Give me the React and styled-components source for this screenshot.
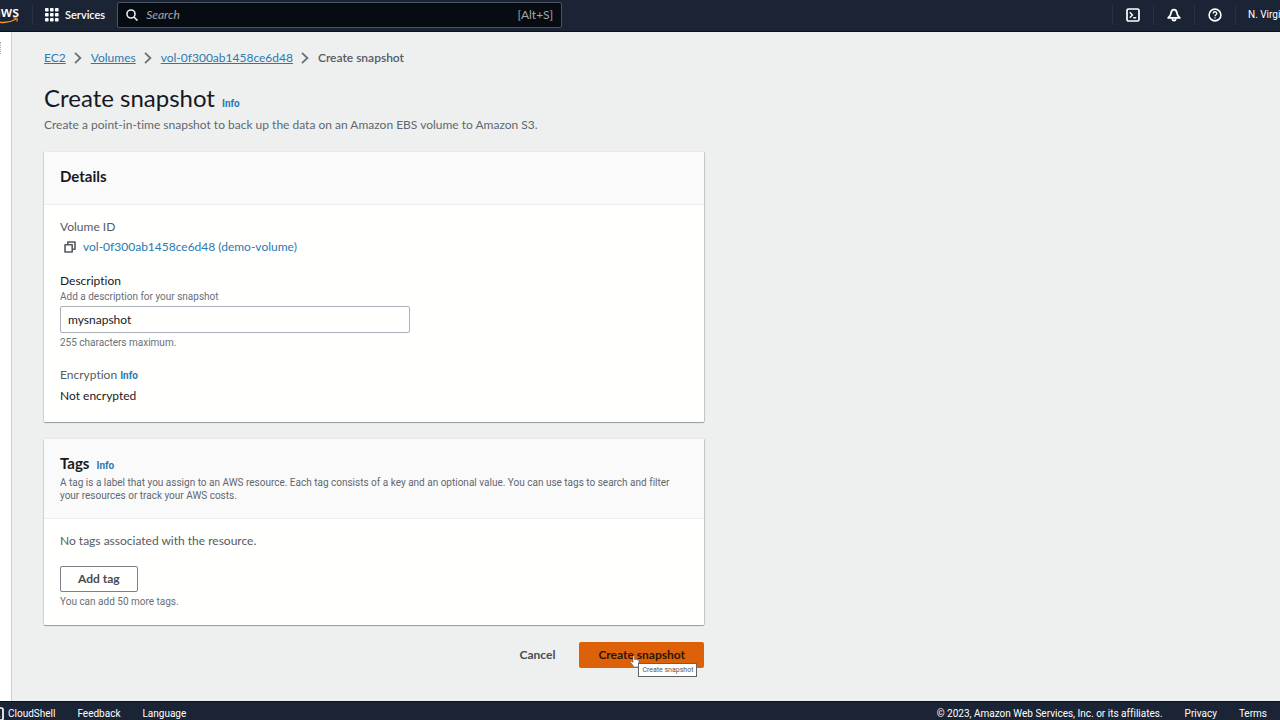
import React, { useState } from "react";
import styled, { createGlobalStyle } from "styled-components";

const GlobalStyle = createGlobalStyle`
  * {
    box-sizing: border-box;
  }
  body {
    margin: 0;
    background: #eef0f0;
    color: #16191f;
    font-family: Lato, "Open Sans", sans-serif;
    font-size: 12px;
    line-height: 20px;
    font-variant-ligatures: none;
  }
  h1, h2, p, ol {
    margin: 0;
    padding: 0;
  }
  button, input {
    font-family: inherit;
  }
`;

//small print uses a taller face so it stays readable
const smallFont = `Roboto, "Open Sans", sans-serif`;

//icons
const GridIcon = () => (
  <svg width="14" height="14" viewBox="0 0 14 14" fill="#fff" aria-hidden="true">
    {[0, 5, 10].map((y) =>
      [0, 5, 10].map((x) => (
        <rect key={`${x}-${y}`} x={x} y={y} width="3.6" height="3.6" rx="0.8" />
      ))
    )}
  </svg>
);

const SearchIcon = () => (
  <svg width="12" height="12" viewBox="0 0 12 12" fill="none" stroke="#e8eaec" strokeWidth="1.6" aria-hidden="true">
    <circle cx="5" cy="5" r="4" />
    <path d="M8 8l3.4 3.6" />
  </svg>
);

const ShellIcon = () => (
  <svg width="14" height="14" viewBox="0 0 14 14" fill="none" stroke="#fff" strokeWidth="1.7" aria-hidden="true">
    <rect x="1" y="1" width="12" height="12" rx="1.6" />
    <path d="M3.8 4.3L6.4 7 3.8 9.7M7.2 9.8h3" strokeWidth="1.4" />
  </svg>
);

const BellIcon = () => (
  <svg width="14" height="14" viewBox="0 0 14 14" fill="none" stroke="#fff" strokeWidth="1.8" strokeLinejoin="round" aria-hidden="true">
    <path d="M7 1.6C5 1.6 4.3 3.2 4.1 5 3.9 7 3 8.3 1.2 9.9h11.6C11 8.3 10.1 7 9.9 5 9.7 3.2 9 1.6 7 1.6z" />
    <path d="M5.3 10.4c0 2.8 3.4 2.8 3.4 0" />
  </svg>
);

const HelpIcon = () => (
  <svg width="14" height="14" viewBox="0 0 14 14" fill="none" stroke="#fff" strokeWidth="1.6" aria-hidden="true">
    <circle cx="7" cy="7" r="5.9" />
    <path d="M5.2 5.5c0-2.3 3.6-2.3 3.6-.1 0 1.4-1.8 1.3-1.8 2.8M7 9.2v1.3" strokeWidth="1.3" />
  </svg>
);

const ChevronIcon = () => (
  <svg width="8" height="12" viewBox="0 0 8 12" fill="none" stroke="#687078" strokeWidth="1.8" aria-hidden="true">
    <path d="M1 0.8L6.4 6 1 11.2" />
  </svg>
);

const CopyIcon = () => (
  <svg width="12" height="12" viewBox="0 0 12 12" fill="none" stroke="#545b64" strokeWidth="1.6" strokeLinejoin="round" aria-hidden="true">
    <rect x="1" y="3.8" width="7.2" height="7.2" />
    <path d="M3.8 3.6V1H11v7.2H8.4" />
  </svg>
);

const HandCursor = () => (
  <svg width="10" height="13" viewBox="0 0 10 13" fill="#fff" stroke="#5a4a40" strokeWidth="0.5" strokeLinejoin="round" aria-hidden="true">
    <path d="M3 7.4V1.2c0-1 1.4-1 1.4 0v3.4c.3-.7 1.4-.6 1.5.2.4-.6 1.4-.4 1.5.3.5-.5 1.5-.2 1.5.7v2.8c0 1.2-.8 1.8-.8 3.4H3.6C3.5 10.5 2 9.3.7 7.4c-.5-.9.5-1.5 1.2-.9z" />
  </svg>
);

const Smile = () => (
  <svg width="30" height="7" viewBox="0 0 30 7" fill="none" stroke="#f0962a" strokeWidth="1.3" aria-hidden="true">
    <path d="M2 1.5c7 5.2 17 5.2 25 .8M24.5 1.2c2.5-.5 4.5-.3 3.3 3.3" />
  </svg>
);

//page frame
const Page = styled.div`
  display: flex;
  flex-direction: column;
  height: 100vh;
  overflow: hidden;
`;

const TopBar = styled.header`
  display: flex;
  align-items: center;
  flex: none;
  height: 32px;
  padding-bottom: 2px;
  border-bottom: 1px solid #0a1220;
  background: #1b2434;
  color: #fff;
`;

const Logo = styled.a`
  display: flex;
  flex-direction: column;
  align-items: flex-end;
  justify-content: center;
  flex: none;
  width: 19px;
  height: 28px;
  overflow: hidden;
  color: #fff;
  font-family: "Open Sans", sans-serif;
  font-size: 14px;
  line-height: 11px;
  font-weight: 600;
  text-decoration: none;
`;

const BarButton = styled.button`
  display: flex;
  align-items: center;
  justify-content: center;
  flex: none;
  gap: 6px;
  min-width: 41px;
  height: 20px;
  padding: 0 12px;
  border: 0;
  border-left: 1px solid #273142;
  background: transparent;
  color: #fff;
  font-family: ${smallFont};
  font-size: 10px;
  white-space: nowrap;
`;

const ServicesButton = styled(BarButton)`
  margin-left: 13px;
  font-family: inherit;
  font-size: 11px;
  font-weight: 600;
`;

const SearchBox = styled.label`
  display: flex;
  align-items: center;
  gap: 8px;
  flex: 0 1 445px;
  height: 26px;
  padding: 0 8px;
  border: 1px solid #4b5461;
  border-radius: 2px;
  background: #070c13;
  color: #a3a7ad;

  input {
    flex: 1;
    min-width: 0;
    padding: 0;
    border: 0;
    outline: 0;
    background: transparent;
    color: #fff;
    font-size: 12px;
  }
  input::placeholder {
    color: #a3a7ad;
    font-style: italic;
  }
`;

const BarTools = styled.div`
  display: flex;
  flex: none;
  width: 168px;
  margin-left: auto;
  overflow: hidden;
`;

const Middle = styled.div`
  display: flex;
  flex: 1;
  min-height: 0;
`;

const SideRail = styled.aside`
  flex: none;
  width: 12px;
  padding-top: 10px;
  border-right: 1px solid #cdd0d2;
  background: #fff;
`;

const RailHandle = styled.div`
  width: 1px;
  height: 12px;
  border-left: 1px dotted #aab0b5;
`;

const Main = styled.main`
  flex: 1;
  min-width: 0;
  padding: 16px 32px 0;
  overflow: hidden;
`;

const BottomBar = styled.footer`
  display: flex;
  align-items: center;
  flex: none;
  gap: 22px;
  height: 19px;
  padding: 6px 13px 0 0;
  border-top: 1px solid #0a1220;
  background: #1b2434;
  color: #fff;
  font-family: ${smallFont};
  font-size: 10px;
  line-height: 16px;

  a {
    color: inherit;
    text-decoration: none;
  }
`;

const ShellLink = styled.a`
  display: flex;
  align-items: center;
  gap: 4px;
`;

const ClippedIcon = styled.span`
  display: flex;
  justify-content: flex-end;
  width: 4px;
  overflow: hidden;

  svg {
    flex: none;
  }
`;

const Copyright = styled.span`
  margin-left: auto;
`;

//page content
const Breadcrumbs = styled.ol`
  display: flex;
  align-items: center;
  list-style: none;

  li {
    display: flex;
    align-items: center;
    gap: 8px;
    margin-right: 9px;
    color: #545b64;
  }
  a {
    color: #2a7ab0;
    text-underline-offset: 1px;
  }
  li:last-child {
    font-weight: 600;
  }
`;

const TitleRow = styled.div`
  display: flex;
  align-items: baseline;
  gap: 7px;
  margin-top: ${(props) => (props.$page ? 14 : 0)}px;
`;

const PageTitle = styled.h1`
  font-size: 24px;
  line-height: 32px;
  font-weight: 400;
`;

const CardTitle = styled.h2`
  font-size: 15px;
  line-height: 20px;
  font-weight: 700;
`;

const InfoLink = styled.a`
  color: #2a7ab0;
  font-family: ${smallFont};
  font-size: 10px;
  font-weight: 700;
  text-decoration: none;
`;

const Lead = styled.p`
  margin-top: 1px;
  color: #5f676f;
`;

const Form = styled.form`
  display: flex;
  flex-direction: column;
  gap: 17px;
  max-width: 660px;
  margin-top: 17px;
`;

const Card = styled.section`
  background: #fffffd;
  border-radius: 1px;
  box-shadow: 0 1px 1px #93989c, 1px 0 1px #c5c8ca, -1px 0 1px #d5d8d9;
`;

const CardHeader = styled.div`
  padding: 14px 16px ${(props) => (props.$tall ? 16 : 18)}px;
  border-bottom: 1px solid #eceeee;
  background: #fafafa;
`;

const CardNote = styled.p`
  color: #5f676f;
  font-family: ${smallFont};
  font-size: 10px;
  line-height: 13px;
`;

const CardBody = styled.div`
  display: flex;
  flex-direction: column;
  align-items: flex-start;
  gap: 15px;
  padding: 12px 16px 16px;
`;

const Field = styled.div`
  display: flex;
  flex-direction: column;
  width: 100%;
  max-width: 350px;
`;

const Muted = styled.span`
  color: #545b64;
`;

const Hint = styled.span`
  color: #687078;
  font-family: ${smallFont};
  font-size: 10px;
  line-height: 14px;
`;

const FieldLabel = styled.label`
  line-height: 18px;
`;

const TextInput = styled.input`
  width: 100%;
  height: 27px;
  margin: 2px 0 3px;
  padding: 0 7px;
  border: 1px solid #aab0b5;
  border-radius: 2px;
  outline: 0;
  background: #fffffd;
  color: #16191f;
  font-size: 12px;
`;

const VolumeLine = styled.div`
  display: flex;
  align-items: center;
  gap: 7px;
  padding-left: 4px;

  a {
    color: #2a7ab0;
    text-decoration: none;
  }
`;

const IconButton = styled.button`
  display: flex;
  padding: 0;
  border: 0;
  background: transparent;
`;

const Button = styled.button`
  height: 26px;
  padding: 0 ${(props) => (props.$variant === "primary" ? 18 : 17)}px;
  border: 1px solid ${(props) => (props.$variant === "normal" ? "#7b8187" : "transparent")};
  border-radius: 2px;
  background: ${(props) => (props.$variant === "primary" ? "#dd6108" : "transparent")};
  color: ${(props) => (props.$variant === "primary" ? "#2d1508" : "#464c54")};
  font-size: 12px;
  line-height: 20px;
  font-weight: 700;
`;

const TagActions = styled.div`
  display: flex;
  flex-direction: column;
  align-items: flex-start;
  gap: 3px;
`;

const Actions = styled.div`
  display: flex;
  justify-content: flex-end;
  gap: 6px;
`;

const SubmitWrap = styled.div`
  position: relative;
`;

const Pointer = styled.span`
  position: absolute;
  top: 13px;
  left: 51px;
  line-height: 0;
`;

const Tooltip = styled.span`
  position: absolute;
  top: 21px;
  left: 59px;
  padding: 0 3px;
  border: 1px solid #5f6266;
  background: #fff;
  color: #575757;
  font-family: ${smallFont};
  font-size: 7px;
  line-height: 12px;
  white-space: nowrap;
`;

const Header = () => {
  return (
    <TopBar>
      <Logo href="#home">
        <span>aws</span>
        <Smile />
      </Logo>
      <ServicesButton type="button">
        <GridIcon />
        Services
      </ServicesButton>
      <SearchBox>
        <SearchIcon />
        <input type="text" placeholder="Search" aria-label="Search" />
        <span>[Alt+S]</span>
      </SearchBox>
      <BarTools>
        <BarButton type="button" aria-label="CloudShell">
          <ShellIcon />
        </BarButton>
        <BarButton type="button" aria-label="Notifications">
          <BellIcon />
        </BarButton>
        <BarButton type="button" aria-label="Help">
          <HelpIcon />
        </BarButton>
        <BarButton type="button">N. Virginia</BarButton>
      </BarTools>
    </TopBar>
  );
};

const Footer = () => {
  return (
    <BottomBar>
      <ShellLink href="#cloudshell">
        <ClippedIcon>
          <ShellIcon />
        </ClippedIcon>
        CloudShell
      </ShellLink>
      <a href="#feedback">Feedback</a>
      <a href="#language">Language</a>
      <Copyright>© 2023, Amazon Web Services, Inc. or its affiliates.</Copyright>
      <a href="#privacy">Privacy</a>
      <a href="#terms">Terms</a>
    </BottomBar>
  );
};

const App = () => {
  const [description, setDescription] = useState("mysnapshot");

  return (
    <Page>
      <GlobalStyle />
      <Header />
      <Middle>
        <SideRail>
          <RailHandle />
        </SideRail>
        <Main>
          <nav aria-label="Breadcrumbs">
            <Breadcrumbs>
              {["EC2", "Volumes", "vol-0f300ab1458ce6d48"].map((name) => (
                <li key={name}>
                  <a href={`#${name}`}>{name}</a>
                  <ChevronIcon />
                </li>
              ))}
              <li>Create snapshot</li>
            </Breadcrumbs>
          </nav>
          <TitleRow $page>
            <PageTitle>Create snapshot</PageTitle>
            <InfoLink href="#info">Info</InfoLink>
          </TitleRow>
          <Lead>
            Create a point-in-time snapshot to back up the data on an Amazon EBS
            volume to Amazon S3.
          </Lead>

          <Form onSubmit={(e) => e.preventDefault()}>
            <Card>
              <CardHeader>
                <CardTitle>Details</CardTitle>
              </CardHeader>
              <CardBody>
                <Field>
                  <Muted>Volume ID</Muted>
                  <VolumeLine>
                    <IconButton type="button" aria-label="Copy volume ID">
                      <CopyIcon />
                    </IconButton>
                    <a href="#volume">vol-0f300ab1458ce6d48 (demo-volume)</a>
                  </VolumeLine>
                </Field>
                <Field>
                  <FieldLabel htmlFor="description">Description</FieldLabel>
                  <Hint>Add a description for your snapshot</Hint>
                  <TextInput
                    id="description"
                    type="text"
                    maxLength={255}
                    value={description}
                    onChange={(e) => setDescription(e.target.value)}
                  />
                  <Hint>255 characters maximum.</Hint>
                </Field>
                <Field>
                  <Muted>
                    Encryption <InfoLink href="#encryption">Info</InfoLink>
                  </Muted>
                  <span>Not encrypted</span>
                </Field>
              </CardBody>
            </Card>

            <Card>
              <CardHeader $tall>
                <TitleRow>
                  <CardTitle>Tags</CardTitle>
                  <InfoLink href="#tags">Info</InfoLink>
                </TitleRow>
                <CardNote>
                  A tag is a label that you assign to an AWS resource. Each tag
                  consists of a key and an optional value. You can use tags to
                  search and filter your resources or track your AWS costs.
                </CardNote>
              </CardHeader>
              <CardBody>
                <Muted>No tags associated with the resource.</Muted>
                <TagActions>
                  <Button type="button" $variant="normal">
                    Add tag
                  </Button>
                  <Hint>You can add 50 more tags.</Hint>
                </TagActions>
              </CardBody>
            </Card>

            <Actions>
              <Button type="button">Cancel</Button>
              <SubmitWrap>
                <Button type="submit" $variant="primary">
                  Create snapshot
                </Button>
                <Pointer>
                  <HandCursor />
                </Pointer>
                <Tooltip role="tooltip">Create snapshot</Tooltip>
              </SubmitWrap>
            </Actions>
          </Form>
        </Main>
      </Middle>
      <Footer />
    </Page>
  );
};

export default App;
